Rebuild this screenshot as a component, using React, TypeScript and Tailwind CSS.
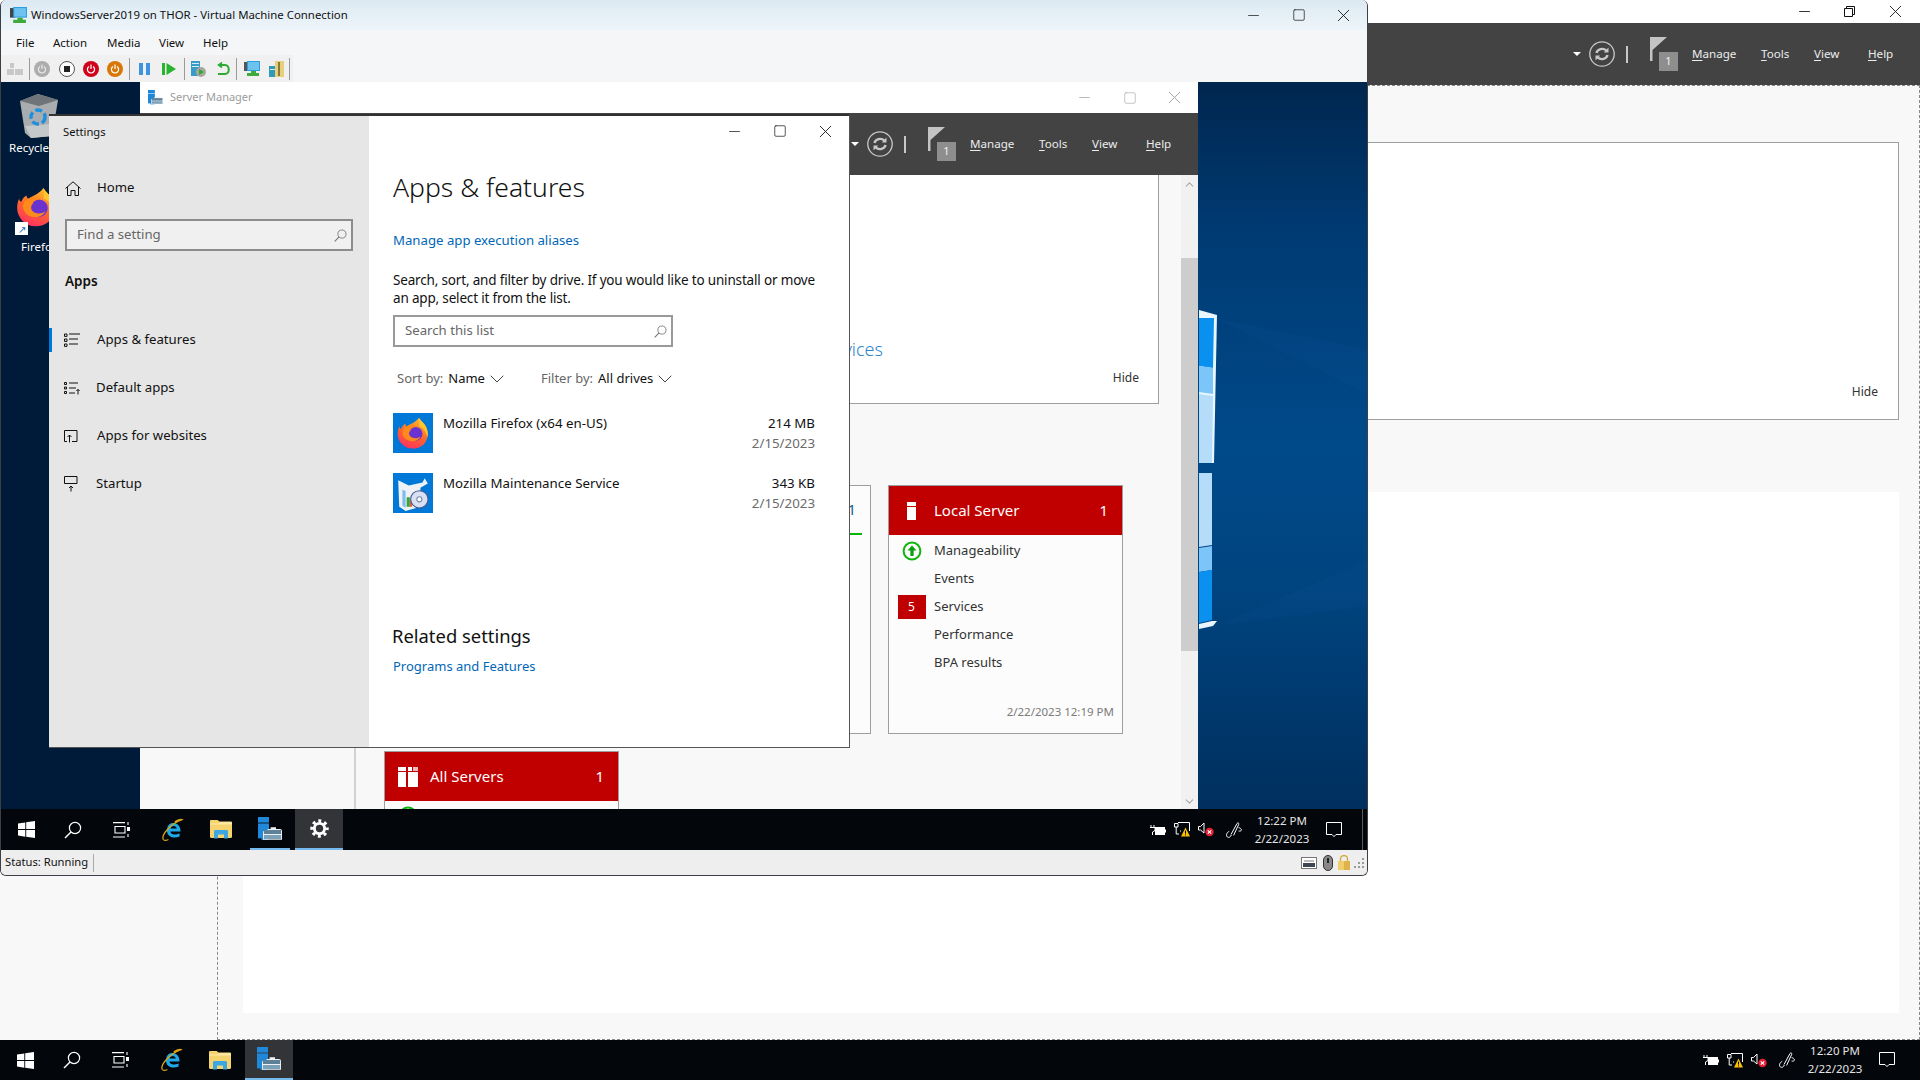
import { ChevronDown, ChevronUp, Minus, Square, X } from "lucide-react";
import type { ReactNode } from "react";

const SEGOE = "font-['Noto_Sans',sans-serif]";

function WinLogo() {
  return (
    <svg width="17" height="17" viewBox="0 0 17 17" fill="#fff">
      <path d="M0 2.4 7.3 1.4V8H0ZM8.2 1.3 17 0V8H8.2ZM0 9H7.3V15.7L0 14.6ZM8.2 9H17V17L8.2 15.8Z" />
    </svg>
  );
}

function SearchGlyph({ color = "#fff", size = 18 }: { color?: string; size?: number }) {
  return (
    <svg width={size} height={size} viewBox="0 0 18 18" fill="none" stroke={color} strokeWidth="1.2">
      <circle cx="11" cy="7" r="5.6" />
      <path d="M7 11 1 17" strokeWidth="1.5" />
    </svg>
  );
}

function TaskView() {
  return (
    <svg width="17" height="16" viewBox="0 0 17 16" fill="none" stroke="#fff" strokeWidth="1.1">
      <path d="M0 .6H12M2 4.5H12V11H2ZM0 15H12M15 0V3M15 12V15" />
      <rect x="14" y="5" width="3" height="4" fill="#fff" stroke="none" />
    </svg>
  );
}

function IEIcon() {
  return (
    <svg width="24" height="24" viewBox="0 0 24 24" fill="none">
      <path d="M6 11.5C6.6 7 9 5 12.4 5 17 5 19.6 8.6 19.5 13.5H9.4C9.6 16.8 14.4 17.3 18.6 15.4V18.4C13 21 5.4 19.3 6 11.5Z" fill="#1ea8e8" />
      <path d="M9.6 10.6H15.7C15.6 7.2 10 7 9.6 10.6Z" fill="#04070c" />
      <path d="M2.4 21.6C-.2 17.6 9 6 21 1.6 19 .8 16 2.2 13.8 3.8" stroke="#d8a418" strokeWidth="1.3" />
      <path d="M2.4 21.6C3.4 22.6 5.6 22.4 7.4 21.4" stroke="#d8a418" strokeWidth="1.1" />
    </svg>
  );
}

function FolderIcon() {
  return (
    <svg width="22" height="19" viewBox="0 0 22 19">
      <path d="M0 1.2C0 .5.5 0 1.2 0H7.6L9.4 1.6H20.8C21.5 1.6 22 2 22 2.8V16.8C22 17.5 21.5 18 20.8 18H1.2C.5 18 0 17.5 0 16.8Z" fill="#f5d36e" />
      <path d="M0 3.6H8.2L10 2.2H22V4.4H0Z" fill="#ffe9a8" />
      <path d="M4 18.6V11.4C4 10.6 4.6 10 5.4 10H16.6C17.4 10 18 10.6 18 11.4V18.6H14V14.6H8V18.6Z" fill="#3ba7e3" />
    </svg>
  );
}

function ServerManagerIcon({ size = 24 }: { size?: number }) {
  return (
    <svg width={size} height={size} viewBox="0 0 24 24">
      <rect x="0" y="0" width="11" height="5.6" fill="#1f88d8" />
      <rect x="0" y="6.4" width="11" height="15" fill="#1f88d8" />
      <rect x="3.5" y="21" width="7" height="2" fill="#1f88d8" />
      <path d="M9 14.2C9 12.6 9.6 12 11 12H12.6V10.2H18V12H22C23 12 24 12.8 24 14V22.8H5V14.2Z" fill="#eef2f5" />
      <rect x="5.9" y="13" width="17.2" height="4" fill="#5d8199" />
      <rect x="5.9" y="18" width="17.2" height="4" fill="#7ca0b8" />
    </svg>
  );
}

function Gear() {
  return (
    <svg width="19" height="19" viewBox="0 0 20 20" fill="none" stroke="#fff">
      <circle cx="10" cy="10" r="5.4" strokeWidth="3" />
      <circle cx="10" cy="10" r="8" strokeWidth="3.4" strokeDasharray="3.1 3.18" strokeDashoffset="1.5" />
    </svg>
  );
}

function Plug() {
  return (
    <svg width="16" height="12" viewBox="0 0 16 12" fill="none" stroke="#fff">
      <path d="M1 1V3M4 1V3M0 3.5H5V6.5L2.5 8V11" />
      <rect x="5.5" y="3.5" width="9" height="7" fill="#fff" />
      <rect x="14.8" y="5.5" width="1.2" height="3" fill="#fff" stroke="none" />
    </svg>
  );
}

function NetworkWarn() {
  return (
    <svg width="16" height="15" viewBox="0 0 16 15" fill="none">
      <path d="M4 .5H15.5V9M.5 1.5H4V5H.5ZM2.2 5V12H5M6 9H7" stroke="#fff" />
      <path d="M11.5 5.5 16 14.5H7Z" fill="#fbbf08" />
      <rect x="11" y="8.6" width="1" height="3" fill="#000" />
      <rect x="11" y="12.4" width="1" height="1" fill="#000" />
    </svg>
  );
}

function SpeakerMuted() {
  return (
    <svg width="16" height="15" viewBox="0 0 16 15" fill="none">
      <path d="M.5 4.5H2.5L6 1V11L2.5 8H.5Z" stroke="#fff" />
      <circle cx="11.5" cy="10" r="4.2" fill="#e81e34" />
      <path d="M9.8 8.3 13.2 11.7M13.2 8.3 9.8 11.7" stroke="#fff" strokeWidth="1.2" />
    </svg>
  );
}

function Pen() {
  return (
    <svg width="16" height="16" viewBox="0 0 16 16" fill="none" stroke="#fff">
      <path d="M5 12.5 11 1.5C11.6.4 13.2 1 12.8 2.2L7.6 13.4" />
      <path d="M3.2 9.4C.5 10.5-.2 13.6 1.4 15 3 16 4.4 15 5.4 13M12.6 5.6C14 6 15.4 6.6 15.4 7.8 15.4 9 14 9.4 12.6 9" />
    </svg>
  );
}

function Chat() {
  return (
    <svg width="16" height="16" viewBox="0 0 16 16" fill="none" stroke="#fff">
      <path d="M.5.5H15.5V12.5H10L8 14.6 6 12.5H.5Z" />
    </svg>
  );
}

function Tray({ time, date }: { time: string; date: string }) {
  return (
    <div className="flex h-full items-center">
      <div className="flex w-[24px] justify-start"><Plug /></div>
      <div className="flex w-[24px] justify-start"><NetworkWarn /></div>
      <div className="flex w-[28px] justify-start"><SpeakerMuted /></div>
      <div className="flex w-[24px] justify-start"><Pen /></div>
      <div className="flex w-[64px] flex-col items-center text-[11.5px] leading-[18px] text-[#e4e4e4]">
        <span>{time}</span>
        <span>{date}</span>
      </div>
      <div className="ml-[12px] flex w-[20px]"><Chat /></div>
    </div>
  );
}

function Taskbar({ time, date, sm, settings }: { time: string; date: string; sm: string; settings: boolean }) {
  return (
    <div className="flex h-full items-center justify-between bg-[#03060b]">
      <div className="flex h-full items-center">
        <div className="flex h-full w-[48px] items-center justify-center pl-[2px]"><WinLogo /></div>
        <div className="flex h-full w-[48px] items-center justify-center"><SearchGlyph /></div>
        <div className="flex h-full w-[48px] items-center justify-center"><TaskView /></div>
        <div className="flex h-full w-[52px] items-center justify-center pl-[3px]"><IEIcon /></div>
        <div className="flex h-full w-[48px] items-center justify-center"><FolderIcon /></div>
        <div className={`flex h-full items-center justify-center ${sm}`}><ServerManagerIcon /></div>
        {settings && (
          <div className="flex h-full w-[48px] items-center justify-center border-b-2 border-[#76b9ed] bg-[#333438]"><Gear /></div>
        )}
      </div>
      <div className="h-full pr-[21px]"><Tray time={time} date={date} /></div>
    </div>
  );
}

function Refresh() {
  return (
    <svg width="26" height="26" viewBox="0 0 26 26" fill="none" stroke="#c8c8c8">
      <circle cx="13" cy="13" r="12.2" strokeWidth="1.3" />
      <path d="M7.5 12C8.4 8 14 6.5 17.4 9.6" strokeWidth="2.4" />
      <path d="M18.5 14C17.6 18 12 19.5 8.6 16.4" strokeWidth="2.4" />
      <path d="M19.5 6.5V11.5H14.8Z" fill="#c8c8c8" stroke="none" />
      <path d="M6.5 19.5V14.5H11.2Z" fill="#c8c8c8" stroke="none" />
    </svg>
  );
}

function MenuLabel({ first, rest, width }: { first: string; rest: string; width: string }) {
  return (
    <span className={`text-[11.6px] text-[#ececec] ${width}`}>
      <u className="underline underline-offset-2">{first}</u>
      {rest}
    </span>
  );
}

function ManagerBar() {
  return (
    <div className="flex h-[62px] items-center justify-end bg-[#434343]">
      <div className="mr-[8px] h-0 w-0 border-x-[4px] border-t-[4px] border-x-transparent border-t-white" />
      <Refresh />
      <div className="mx-[11px] h-[17px] w-[2px] bg-[#c8c8c8]" />
      <div className="relative mr-[14px] ml-[11px] h-[34px] w-[28px]">
        <svg width="20" height="24" viewBox="0 0 20 24" className="absolute top-0 left-0">
          <path d="M0 0H2.5V24H0ZM2.5 0H17L2.5 13Z" fill="#c4c4c4" />
        </svg>
        <div className="absolute top-[15px] left-[9px] flex h-[19px] w-[19px] items-center justify-center bg-[#8e8e8e] text-[11px] text-[#efefef]">1</div>
      </div>
      <MenuLabel first="M" rest="anage" width="w-[69px]" />
      <MenuLabel first="T" rest="ools" width="w-[53px]" />
      <MenuLabel first="V" rest="iew" width="w-[54px]" />
      <MenuLabel first="H" rest="elp" width="w-[52px]" />
    </div>
  );
}

function ToolbarSep() {
  return <div className="mx-[6px] h-[22px] w-px bg-[#9a9a9a]" />;
}

function RoundBtn({ fill, ring, children }: { fill: string; ring: string; children: ReactNode }) {
  return (
    <div className={`flex h-[16px] w-[16px] items-center justify-center rounded-full ${fill} ${ring}`}>{children}</div>
  );
}

function PowerGlyph({ color }: { color: string }) {
  return (
    <svg width="10" height="10" viewBox="0 0 10 10" fill="none" stroke={color} strokeWidth="1.2">
      <path d="M3 2.4A3.6 3.6 0 1 0 7 2.4M5 .5V5" />
    </svg>
  );
}

function VmToolbar() {
  return (
    <div className="flex h-[27px] w-[292px] shrink-0 items-center bg-[#f0f0f0] pl-[6px]">
      <svg width="16" height="12" viewBox="0 0 16 12" fill="#c8c8c8"><path d="M3 0H7V5H3ZM0 6H7V12H0ZM8 6H16V12H8Z" /></svg>
      <ToolbarSep />
      <div className="-ml-[2px]"><RoundBtn fill="bg-[#adadad]" ring=""><PowerGlyph color="#e8e8e8" /></RoundBtn></div>
      <div className="ml-[9px]">
        <RoundBtn fill="bg-white" ring="border border-[#555]"><div className="h-[6px] w-[6px] bg-[#222]" /></RoundBtn>
      </div>
      <div className="ml-[8px]"><RoundBtn fill="bg-[#d0021b]" ring=""><PowerGlyph color="#fff" /></RoundBtn></div>
      <div className="ml-[8px]"><RoundBtn fill="bg-[#d97706]" ring=""><PowerGlyph color="#fff" /></RoundBtn></div>
      <ToolbarSep />
      <svg className="ml-[3px]" width="11" height="12" viewBox="0 0 11 12" fill="#3c95de"><path d="M0 0H4V12H0ZM7 0H11V12H7Z" /></svg>
      <svg className="ml-[12px]" width="14" height="12" viewBox="0 0 14 12" fill="#29b32f"><path d="M0 0H3V12H0ZM4.5 0 14 6 4.5 12Z" /></svg>
      <div className="ml-[2px]"><ToolbarSep /></div>
      <svg width="15" height="16" viewBox="0 0 15 16"><path d="M0 0H9V15H0Z" fill="#3a9bc8" /><path d="M1 2H8V3H1ZM1 5H8V6H1Z" fill="#d5eef8" /><circle cx="10" cy="11" r="5" fill="#a8a8a0" /><path d="M8 8 13 11 8 14Z" fill="#2caa32" /></svg>
      <svg className="ml-[11px]" width="13" height="14" viewBox="0 0 13 14" fill="none" stroke="#2caa32" strokeWidth="2"><path d="M3 3H8C13 3 13 12 8 12H1" /><path d="M5 .5 1.5 3 5 5.5" strokeWidth="1.6" /></svg>
      <ToolbarSep />
      <svg className="ml-[1px]" width="16" height="16" viewBox="0 0 16 16"><rect x="0" y="1" width="5" height="9" fill="#555" /><rect x="3" y="0" width="13" height="10" fill="#2d9ee0" /><rect x="4" y="1" width="11" height="8" fill="#6cc3ef" /><path d="M7 10H12V12H15V15H3V12H7Z" fill="#3faa3c" /></svg>
      <svg className="ml-[9px]" width="15" height="16" viewBox="0 0 15 16"><rect x="0" y="5" width="7" height="11" fill="#2f9bb8" /><rect x="6" y="0" width="9" height="16" fill="#e8cf7e" /><rect x="9" y="1" width="2" height="14" fill="#8a7a3a" /><rect x="1" y="8" width="5" height="1" fill="#cdeef6" /></svg>
      <div className="ml-[5px] h-[22px] w-px bg-[#9a9a9a]" />
    </div>
  );
}

function FirefoxIcon({ size, id }: { size: number; id: string }) {
  return (
    <svg width={size} height={size} viewBox="0 0 40 40">
      <defs>
        <linearGradient id={id} x1="0.7" y1="0" x2="0.3" y2="1">
          <stop offset="0" stopColor="#ffbd2e" />
          <stop offset="0.5" stopColor="#ff6a2a" />
          <stop offset="1" stopColor="#ff2f63" />
        </linearGradient>
      </defs>
      <path d="M27 2C29 6 33 8 35 12 39 19 38 28 32 34 25 40 13 40 7 33 1 27 1 18 4 12 4 14 5 15 6 15 7 12 9 10 11 9 11 11 12 12 13 12 17 9 23 8 27 2Z" fill={`url(#${id})`} />
      <path d="M27 2C29 6 33 8 35 12 37 16 38 21 37 25 35 17 31 13 27 12 28 8 28 5 27 2Z" fill="#ffc62b" />
      <circle cx="23" cy="21" r="8.2" fill="#6a33d0" />
      <path d="M8 17C11 11 18 9 25 12.5 20 12.5 17 14.5 17 17 15 19 15 21 16 23 19 27 25 27 29 24 26 30 18 31 13 28 9 26 7 22 8 17Z" fill="#ff8a1c" />
    </svg>
  );
}

function BoxIcon() {
  return (
    <svg width="36" height="36" viewBox="0 0 34 34">
      <path d="M3 5 13 10 26 7 28 3 31 8 24 12V30L10 34 4 30Z" fill="#eef2f6" />
      <path d="M7 14 10 15V31L7 29Z" fill="#7fbcec" />
      <rect x="11" y="21" width="3" height="9" fill="#3aa23c" />
      <rect x="14" y="23" width="2" height="7" fill="#e06030" />
      <circle cx="23" cy="23" r="8.2" fill="#d9e0f4" stroke="#46598a" />
      <circle cx="23" cy="23" r="2.4" fill="#fff" stroke="#7285ab" />
    </svg>
  );
}

function AppRow({ name, size, icon }: { name: string; size: string; icon: ReactNode }) {
  return (
    <div className="mb-[20px] flex h-[40px] text-[13.3px]">
      <div className="flex h-[40px] w-[40px] items-center justify-center bg-[#0078d7]">{icon}</div>
      <div className="ml-[10px] flex-1 leading-[20px] text-[#111]">{name}</div>
      <div className="flex flex-col items-end leading-[20px]">
        <span className="text-[#111]">{size}</span>
        <span className="text-[#6b6b6b]">2/15/2023</span>
      </div>
    </div>
  );
}

function NavIcon({ kind }: { kind: string }) {
  if (kind === "features") {
    return (
      <svg width="16" height="15" viewBox="0 0 16 15" fill="none" stroke="#111">
        <path d="M.5 1H3V3.4H.5ZM.5 6H3V8.4H.5ZM.5 11H3V13.4H.5ZM5 1H16M5 6H14M5 11H14" />
      </svg>
    );
  }
  if (kind === "default") {
    return (
      <svg width="16" height="13" viewBox="0 0 16 13" fill="none" stroke="#111">
        <path d="M.5 .5H2.5V2.5H.5ZM.5 5H2.5V7H.5ZM.5 9.5H2.5V11.5H.5ZM5 1H14M5 6H12M5 11H11M14 12.5V7.5M12.4 9 14 7.4 15.6 9" />
      </svg>
    );
  }
  if (kind === "websites") {
    return (
      <svg width="14" height="13" viewBox="0 0 14 13" fill="none" stroke="#111">
        <path d="M3 11.5H.5V.5H13V11.5H8M5.5 12.5V5M3.5 7 5.5 5 7.5 7" />
      </svg>
    );
  }
  return (
    <svg width="14" height="16" viewBox="0 0 14 16" fill="none" stroke="#111">
      <path d="M.5 .5H13V7.5H.5ZM7 15.5V10M5 12 7 10 9 12" />
    </svg>
  );
}

function SettingsNav({ kind, label, active, textGap }: { kind: string; label: string; active?: boolean; textGap: string }) {
  return (
    <div className="relative flex h-[48px] items-center pl-[15px] text-[13.2px] text-[#111]">
      {active && <div className="absolute left-0 h-[24px] w-[3px] bg-[#0078d7]" />}
      <div className="w-[16px]"><NavIcon kind={kind} /></div>
      <span className={textGap}>{label}</span>
    </div>
  );
}

function SettingsWindow() {
  return (
    <div className={`flex h-[634px] w-[801px] border-t-2 border-r border-b border-t-[#333] border-r-[#555] border-b-[#555] bg-white ${SEGOE}`}>
      <div className="w-[320px] shrink-0 bg-[#e6e6e6]">
        <div className="h-[38px] pt-[8px] pl-[14px] text-[11.2px] leading-[16px] text-[#111]">Settings</div>
        <div className="flex h-[48px] items-center pt-[20px] pl-[16px] text-[13.2px] text-[#111]">
          <svg width="16" height="15" viewBox="0 0 16 15" fill="none" stroke="#111">
            <path d="M.5 7.5 8 .8 15.5 7.5M2.5 6V14.5H6V9.5H10V14.5H13.5V6" />
          </svg>
          <span className="ml-[16px]">Home</span>
        </div>
        <div className="mt-[17px] ml-[16px] flex h-[32px] w-[288px] items-center justify-between border-2 border-[#8c8c8c] bg-[#f0f0f0] pr-[4px] pl-[10px] text-[13.2px] text-[#666]">
          <span>Find a setting</span>
          <SearchGlyph color="#777" size={13} />
        </div>
        <div className="mt-[20px] ml-[16px] text-[13.5px] leading-[20px] font-semibold text-[#111]">Apps</div>
        <div className="mt-[25px]">
          <SettingsNav kind="features" label="Apps & features" active textGap="ml-[17px]" />
          <SettingsNav kind="default" label="Default apps" textGap="ml-[16px]" />
          <SettingsNav kind="websites" label="Apps for websites" textGap="ml-[17px]" />
          <SettingsNav kind="startup" label="Startup" textGap="ml-[16px]" />
        </div>
      </div>
      <div className="min-w-0 flex-1">
        <div className="flex h-[38px] items-center justify-end pr-[13px] pb-[8px] text-[#111]">
          <Minus size={17} strokeWidth={1} />
          <Square className="ml-[30px]" size={14} strokeWidth={1.2} />
          <X className="ml-[28px]" size={21} strokeWidth={1} />
        </div>
        <div className="pr-[34px] pl-[24px]">
          <h1 className="mt-[14px] text-[26.5px] leading-[38px] font-light text-[#111]">Apps &amp; features</h1>
          <div className="mt-[24px] text-[13.2px] leading-[20px] text-[#0067b8]">Manage app execution aliases</div>
          <p className="mt-[21px] text-[13.5px] leading-[18px] tracking-[-0.17px] text-[#111]">
            Search, sort, and filter by drive. If you would like to uninstall or move an app, select it from the list.
          </p>
          <div className="mt-[8px] flex h-[32px] w-[280px] items-center justify-between border-2 border-[#999] pr-[4px] pl-[10px] text-[13.2px] text-[#666]">
            <span>Search this list</span>
            <SearchGlyph color="#777" size={13} />
          </div>
          <div className="mt-[21px] flex h-[22px] items-center pl-[4px] text-[13px]">
            <span className="text-[#666]">Sort by:</span>
            <span className="ml-[5px] text-[#111]">Name</span>
            <ChevronDown className="text-[#444]" size={24} strokeWidth={1} />
            <span className="ml-[32px] text-[#666]">Filter by:</span>
            <span className="ml-[5px] text-[#111]">All drives</span>
            <ChevronDown className="text-[#444]" size={24} strokeWidth={1} />
          </div>
          <div className="mt-[23px]">
            <AppRow name="Mozilla Firefox (x64 en-US)" size="214 MB" icon={<FirefoxIcon size={34} id="ff-list" />} />
            <AppRow name="Mozilla Maintenance Service" size="343 KB" icon={<BoxIcon />} />
          </div>
          <h2 className="mt-[109px] -ml-[1px] text-[18.4px] leading-[28px] text-[#111]">Related settings</h2>
          <div className="mt-[6px] text-[13px] leading-[20px] text-[#0067b8]">Programs and Features</div>
        </div>
      </div>
    </div>
  );
}

const manageMark = (
  <svg width="20" height="20" viewBox="0 0 20 20" fill="none">
    <circle cx="10" cy="10" r="8.4" stroke="#0fb50f" strokeWidth="2" />
    <path d="M10 4.5 14.5 9.5H11.6V15H8.4V9.5H5.5Z" fill="#0a9e0a" />
  </svg>
);

function TileHeader({ icon, title }: { icon: ReactNode; title: string }) {
  return (
    <div className="flex h-[49px] items-center bg-[#c00000] pr-[14px] text-white">
      <div className="flex w-[45px] justify-center">{icon}</div>
      <span className="flex-1 text-[15px]">{title}</span>
      <span className="text-[15px]">1</span>
    </div>
  );
}

function TileRow({ label, mark }: { label: string; mark?: ReactNode }) {
  return (
    <div className="flex h-[28px] items-center text-[13px] text-[#333]">
      <div className="flex w-[45px] justify-center">{mark}</div>
      <span>{label}</span>
    </div>
  );
}

function LocalServerIcon() {
  return (
    <svg width="10" height="18" viewBox="0 0 10 18" fill="#fff"><path d="M0 0H9V4H0ZM0 5H9V18H0Z" /></svg>
  );
}

function AllServersIcon() {
  return (
    <svg width="20" height="20" viewBox="0 0 20 20"><path d="M0 0H8V4H0ZM0 5H8V20H0Z" fill="#fff" /><path d="M10 0H14V4H10Z" fill="#fff" /><path d="M15 0H20V4H15Z" fill="#f0bcbc" /><path d="M10 5H20V20H10Z" fill="#fff" /></svg>
  );
}

function ManagerContent() {
  return (
    <div className="flex-1 pl-[28px]">
      <div className="mr-[22px] flex h-[229px] items-end justify-between border-r border-b border-l border-[#9e9e9e] bg-white pr-[19px] pb-[16px]">
        <div className="mb-[24px] w-[498px] text-right text-[18px] font-light text-[#2f85c9]">Connect this server to cloud services</div>
        <span className="text-[12px] text-[#333]">Hide</span>
      </div>
      <div className="mt-[81px] flex gap-[17px]">
        <div className="h-[249px] w-[235px] border border-[#9e9e9e] bg-[#fcfcfc]" />
        <div className="h-[249px] w-[235px] border border-[#9e9e9e] bg-[#fcfcfc]">
          <div className="flex h-[47px] items-center justify-end pr-[14px] text-[15px] text-[#17608f]">1</div>
          <div className="mr-[8px] h-[2px] bg-[#06b406]" />
        </div>
        <div className="h-[249px] w-[235px] border border-[#9e9e9e] bg-[#fcfcfc]">
          <TileHeader icon={<LocalServerIcon />} title="Local Server" />
          <div className="pt-[2px]">
            <TileRow label="Manageability" mark={manageMark} />
            <TileRow label="Events" />
            <TileRow label="Services" mark={<div className="flex h-[24px] w-[28px] items-center justify-center bg-[#c00000] text-[12px] text-white">5</div>} />
            <TileRow label="Performance" />
            <TileRow label="BPA results" />
            <div className="mt-[26px] pr-[8px] text-right text-[11.5px] text-[#7a7a7a]">2/22/2023 12:19 PM</div>
          </div>
        </div>
      </div>
      <div className="mt-[17px] w-[235px] border border-[#9e9e9e] bg-[#fcfcfc]">
        <TileHeader icon={<AllServersIcon />} title="All Servers" />
        <div className="flex h-[28px] w-[45px] items-center justify-center pt-[2px]">{manageMark}</div>
      </div>
    </div>
  );
}

function GuestManager() {
  return (
    <div className={`flex h-full w-[1058px] flex-col overflow-hidden bg-[#f8f8f8] ${SEGOE}`}>
      <div className="flex h-[31px] shrink-0 items-center bg-white pr-[13px] pl-[8px] text-[#9c9c9c]">
        <ServerManagerIcon size={15} />
        <span className="ml-[7px] text-[11px]">Server Manager</span>
        <div className="flex-1" />
        <Minus size={17} strokeWidth={1} />
        <Square className="ml-[30px]" size={14} strokeWidth={1} />
        <X className="ml-[27px]" size={21} strokeWidth={1} />
      </div>
      <div className="shrink-0"><ManagerBar /></div>
      <div className="flex min-h-0 flex-1 overflow-hidden">
        <div className="w-[216px] shrink-0 border-r-2 border-[#d2d2d2] bg-[#f8f8f8]" />
        <ManagerContent />
        <div className="flex w-[17px] shrink-0 flex-col items-center bg-[#f1f1f1] text-[#a8a8a8]">
          <ChevronUp className="mt-[3px]" size={13} />
          <div className="mt-[67px] h-[393px] w-full bg-[#cdcdcd]" />
          <div className="flex-1" />
          <ChevronDown className="mb-[1px]" size={13} />
        </div>
      </div>
    </div>
  );
}

function WallpaperLight() {
  return (
    <svg width="170" height="330" viewBox="0 0 170 330" className="absolute top-[228px] left-[1198px]">
      <path d="M16 8 170 40V85ZM16 316 170 250V296Z" fill="#1a6cb4" opacity="0.08" />
      <path d="M0 0 18 5 15 153H0Z" fill="#e8f6ff" />
      <path d="M0 8H15L14 58 0 56Z" fill="#0a90ee" />
      <path d="M0 56 14 58 14 84 0 82Z" fill="#7cc5f8" />
      <path d="M0 84 14 86 13 153H0Z" fill="#b5ddfa" />
      <path d="M0 163H13V235L0 237Z" fill="#b5ddfa" />
      <path d="M0 238 13 236V260L0 262Z" fill="#7cc5f8" />
      <path d="M0 262 13 260 13 310 0 313Z" fill="#0a90ee" />
      <path d="M0 314 13 311 18 311 14 316 0 319Z" fill="#e8f6ff" />
    </svg>
  );
}

function VmWindow() {
  return (
    <div className={`flex h-[876px] w-[1368px] flex-col overflow-hidden rounded-t-[6px] rounded-b-[6px] border-r border-b border-l border-[#3a3f48] bg-[#f5f6f7] ${SEGOE}`}>
      <div className="flex h-[30px] shrink-0 items-center bg-[linear-gradient(to_bottom,#dce9f2,#eef5fa)] pr-[13px] pl-[9px] text-[11.4px] text-[#111]">
        <svg width="17" height="17" viewBox="0 0 16 16">
          <rect x="0" y="1" width="5" height="9" fill="#444" />
          <rect x="3" y="0" width="13" height="10" fill="#2d9ee0" />
          <rect x="4" y="1" width="11" height="8" fill="#6cc3ef" />
          <path d="M7 10H12V12H15V15H3V12H7Z" fill="#3faa3c" />
        </svg>
        <span className="ml-[4px]">WindowsServer2019 on THOR - Virtual Machine Connection</span>
        <div className="flex-1" />
        <Minus size={17} strokeWidth={1} />
        <Square className="ml-[30px]" size={14} strokeWidth={1.2} />
        <X className="ml-[27px]" size={21} strokeWidth={1} />
      </div>
      <div className="flex h-[25px] shrink-0 items-center pl-[15px] text-[11.5px] text-[#111]">
        <span className="w-[37px]">File</span>
        <span className="w-[54px]">Action</span>
        <span className="w-[52px]">Media</span>
        <span className="w-[44px]">View</span>
        <span>Help</span>
      </div>
      <VmToolbar />
      <div className="relative h-[727px] shrink-0 overflow-hidden bg-[linear-gradient(to_right,#001a3a_0%,#001a3a_11%,transparent_30%),linear-gradient(to_bottom,#00264e_0%,#003a72_20%,#004a8a_50%,#00447f_70%,#002f5e_100%)]">
        <svg width="40" height="46" viewBox="0 0 40 46" className="absolute top-[10px] left-[18px]">
          <path d="M1 9 19 2 39 8 33 44 12 46 6 41Z" fill="#a9adb0" />
          <path d="M1 9 19 2 39 8 20 14Z" fill="#6e7478" />
          <path d="M6 34 33 32 33 44 12 46Z" fill="#c5c8ca" />
          <circle cx="19" cy="25" r="7" fill="none" stroke="#1d8fe0" strokeWidth="3.4" strokeDasharray="7 3" />
        </svg>
        <div className="absolute top-[57px] left-[8px] text-[11.5px] text-white">Recycle Bin</div>
        <div className="absolute top-[104px] left-[14px]"><FirefoxIcon size={42} id="ff-desk" /></div>
        <div className="absolute top-[140px] left-[14px] flex h-[13px] w-[13px] items-center justify-center bg-white text-[10px] leading-none text-[#1c5fb8]">↗</div>
        <div className="absolute top-[156px] left-[20px] text-[11.5px] text-white">Firefox</div>
        <WallpaperLight />
        <div className="absolute top-0 bottom-0 left-[139px]"><GuestManager /></div>
        <div className="absolute top-[32px] left-[48px]"><SettingsWindow /></div>
      </div>
      <div className="relative h-[41px] shrink-0">
        <Taskbar time="12:22 PM" date="2/22/2023" sm="mx-[5px] w-[40px] border-b-2 border-[#76b9ed]" settings />
        <div className="absolute top-0 right-[4px] h-full w-px bg-[#5a5a5a]" />
      </div>
      <div className="flex h-[25px] shrink-0 items-center justify-between bg-[#eeeeee] pr-[2px] pl-[4px] text-[11.2px] text-[#111]">
        <div className="flex h-full items-center">
          <span className="pr-[5px]">Status: Running</span>
          <div className="h-[18px] w-px bg-[#aaa]" />
        </div>
        <div className="flex items-center">
          <svg width="16" height="12" viewBox="0 0 16 12"><rect x=".5" y=".5" width="15" height="11" fill="#fff" stroke="#777" /><rect x="2" y="6" width="12" height="4" fill="#3d4754" /><rect x="3" y="3" width="10" height="2" fill="#bbb" /></svg>
          <svg className="ml-[6px]" width="10" height="16" viewBox="0 0 10 16"><rect x=".5" y=".5" width="9" height="15" rx="4.5" fill="#888" stroke="#333" /><rect x="4" y="3" width="2" height="5" fill="#222" /></svg>
          <svg className="ml-[5px]" width="12" height="15" viewBox="0 0 12 15"><path d="M2.5 7V4A3.5 3.5 0 0 1 9.5 4V7" fill="none" stroke="#d6a93c" strokeWidth="1.4" /><rect x="0" y="6" width="12" height="9" fill="#f2cd6b" /><rect x="6" y="6" width="6" height="9" fill="#e0b24c" /></svg>
          <svg className="ml-[3px]" width="12" height="12" viewBox="0 0 12 12" fill="#9a9a9a"><path d="M9 1H11V3H9ZM9 5H11V7H9ZM9 9H11V11H9ZM5 5H7V7H5ZM5 9H7V11H5ZM1 9H3V11H1Z" /></svg>
        </div>
      </div>
    </div>
  );
}

export default function App() {
  return (
    <div className={`relative flex h-[1080px] w-[1920px] flex-col overflow-hidden bg-[#f8f8f8] ${SEGOE}`}>
      <div className="flex h-[23px] shrink-0 items-center justify-end bg-white pr-[14px] text-[#111]">
        <Minus size={17} strokeWidth={1.2} />
        <svg className="ml-[31px]" width="11" height="11" viewBox="0 0 11 11" fill="none" stroke="#111"><path d="M2.5 2.5V.5H10.5V8.5H8.5M.5 2.5H8.5V10.5H.5Z" /></svg>
        <X className="ml-[30px]" size={21} strokeWidth={1} />
      </div>
      <div className="shrink-0"><ManagerBar /></div>
      <div className="flex min-h-0 flex-1">
        <div className="w-[217px] shrink-0" />
        <div className="flex-1 border border-dashed border-[#888] pl-[25px]">
          <div className="mt-[56px] mr-[20px] flex h-[278px] items-end justify-end border border-[#9e9e9e] bg-white pr-[20px] pb-[18px]">
            <span className="text-[12px] text-[#333]">Hide</span>
          </div>
          <div className="mt-[72px] mr-[20px] h-[521px] bg-white" />
        </div>
      </div>
      <div className="h-[40px] shrink-0">
        <Taskbar time="12:20 PM" date="2/22/2023" sm="ml-[1px] w-[48px] border-b-2 border-[#76b9ed] bg-[#333438]" settings={false} />
      </div>
      <div className="absolute top-0 left-0"><VmWindow /></div>
    </div>
  );
}
